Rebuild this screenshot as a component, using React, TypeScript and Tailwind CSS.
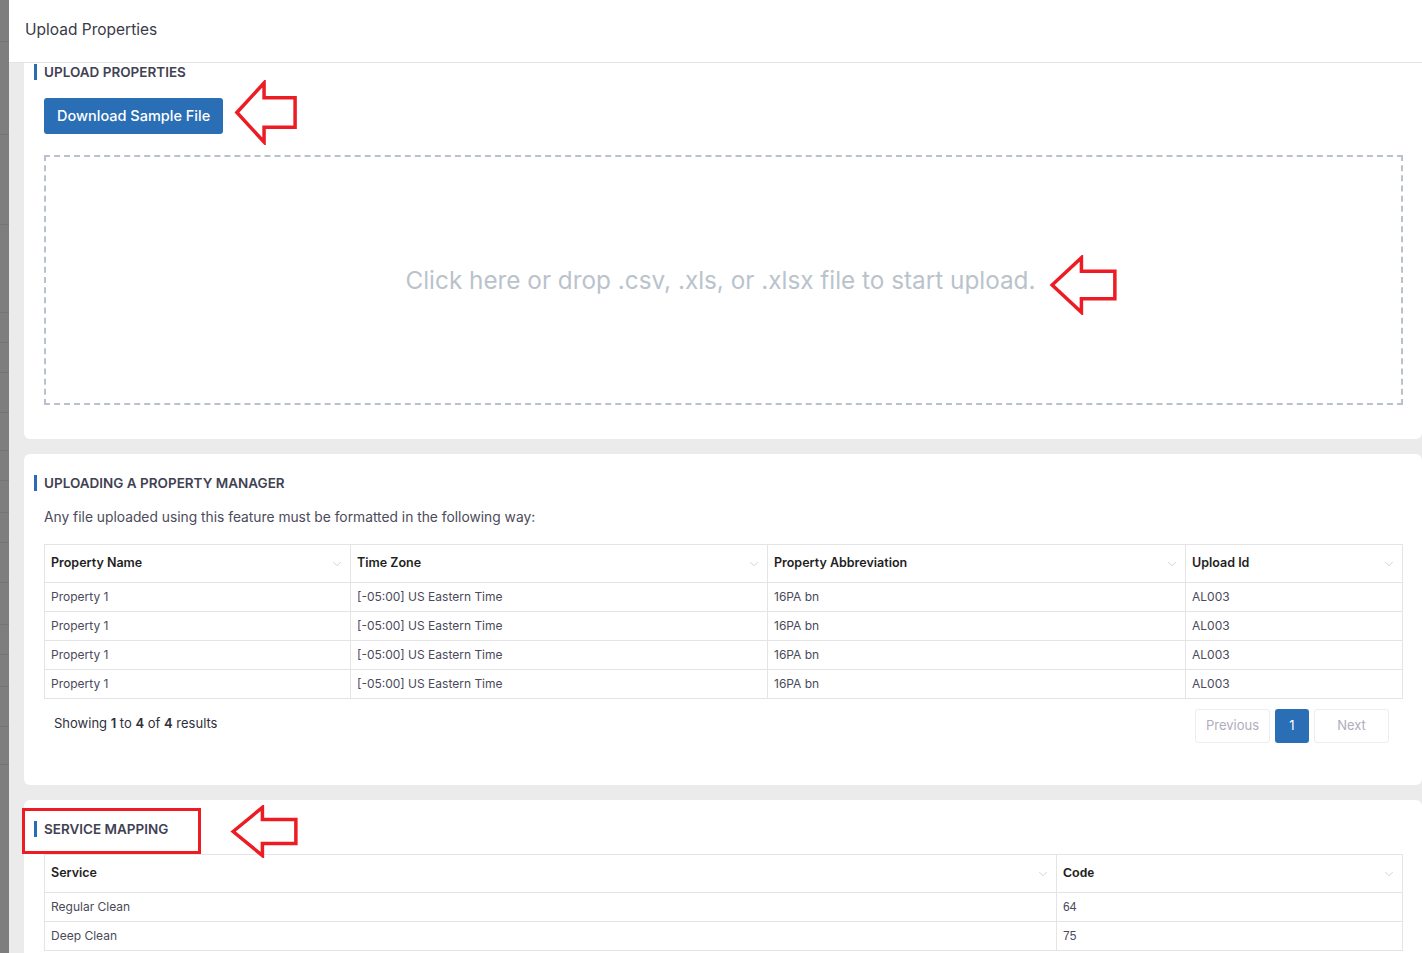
import React from "react"
import { ChevronDown } from "lucide-react"

const font = { fontFamily: "Inter, 'Noto Sans', sans-serif" }
const arial = { fontFamily: "'Liberation Sans', Arial, sans-serif" }

// red outline arrow pointing left, used as a callout
const CalloutArrow = ({ className }: { className: string }) => (
    <svg className={className} viewBox="0 0 66 66" fill="none" preserveAspectRatio="none">
        <path
            d="M3 33 L31 3 L31 18 L63 18 L63 48 L31 48 L31 63 Z"
            stroke="#ed1c24"
            strokeWidth="3.5"
            vectorEffect="non-scaling-stroke"
            fill="white"
        />
    </svg>
)

const SectionTitle = ({ children }: { children: React.ReactNode }) => (
    <div className="flex items-center gap-[7px] h-[16px]">
        <span className="w-[3px] h-[16px] bg-[#2a6cb3]"></span>
        <h3 className="text-[13.5px] leading-[16px] font-semibold text-[#3f4254]">{children}</h3>
    </div>
)

function HeadCell({ label, useArial }: { label: string; useArial?: boolean }) {
    return (
        <div className="h-[37px] px-[6px] flex items-center justify-between">
            <span
                className="font-semibold text-[12.5px] text-[#1f1f1f]"
                style={useArial ? { ...arial, fontWeight: 700 } : undefined}
            >
                {label}
            </span>
            <ChevronDown size={14} strokeWidth={1} className="text-[#b5b5b5]" />
        </div>
    )
}

const rows = [1, 2, 3, 4]

const services = [
    { name: "Regular Clean", code: "64" },
    { name: "Deep Clean", code: "75" },
]

const stripRows = [42, 93, 90, 88, 30, 30, 40, 38, 30, 32, 30, 40, 42, 30, 32, 40, 38]

export default function App() {
    return (
        <div className="w-[1422px] h-[953px] overflow-hidden flex bg-[#ebebeb]" style={font}>
            {/* dimmed page behind the drawer */}
            <div className="w-[9px] shrink-0 bg-[#7e7e7e] flex flex-col">
                {stripRows.map((h, i) => (
                    <div key={i} className="border-b border-[#747474]" style={{ height: h }}></div>
                ))}
            </div>

            <div className="flex-1 flex flex-col">
                {/* drawer header */}
                <div className="h-[63px] shrink-0 bg-white border-b border-[#e2e2e8] flex items-center px-4">
                    <h2 className="text-[15.5px] text-[#3a3a48] -mt-[3px]">Upload Properties</h2>
                </div>

                <div className="pl-[15px] flex flex-col gap-[15px]">
                    {/* upload card */}
                    <div className="relative bg-white rounded-b-[6px] pl-[10px] pr-[19px] pt-[1px] pb-[34px]">
                        <SectionTitle>UPLOAD PROPERTIES</SectionTitle>
                        <div className="pl-[10px] pt-[18px]">
                            <button className="block h-[36px] px-[13px] rounded-[3px] bg-[#2a6eb5] text-white text-[14.5px] font-medium">
                                Download Sample File
                            </button>
                            <div className="mt-[21px] h-[250px] border-2 border-dashed border-[#b9c2ca] flex items-center justify-center">
                                <p className="text-[24.3px] text-[#bac3cc] -ml-[6px]">
                                    Click here or drop .csv, .xls, or .xlsx file to start upload.
                                </p>
                            </div>
                        </div>
                        <CalloutArrow className="absolute left-[210px] top-[17px] w-[64px] h-[65px]" />
                        <CalloutArrow className="absolute left-[1025px] top-[192px] w-[69px] h-[60px]" />
                    </div>

                    {/* format card */}
                    <div className="bg-white rounded-[6px] pl-[10px] pr-[19px] pt-[21px] pb-[42px]">
                        <SectionTitle>UPLOADING A PROPERTY MANAGER</SectionTitle>
                        <div className="pl-[10px]">
                            <p className="mt-[16px] text-[13.8px] leading-[20px] text-[#4b4b5a]">
                                Any file uploaded using this feature must be formatted in the following way:
                            </p>
                            <table className="mt-[17px] w-full border border-[#e4e4e7] border-collapse">
                                <thead>
                                    <tr className="border-b border-[#e4e4e7]">
                                        <th className="w-[306px] p-0"><HeadCell label="Property Name" /></th>
                                        <th className="w-[417px] p-0 border-l border-[#e4e4e7]"><HeadCell label="Time Zone" /></th>
                                        <th className="w-[418px] p-0 border-l border-[#e4e4e7]"><HeadCell label="Property Abbreviation" /></th>
                                        <th className="p-0 border-l border-[#e4e4e7]"><HeadCell label="Upload Id" /></th>
                                    </tr>
                                </thead>
                                <tbody className="text-[12px] text-[#4a4a5a]">
                                    {rows.map((r) => (
                                        <tr key={r} className="h-[29px] border-b border-[#e4e4e7]">
                                            <td className="px-[6px]">Property 1</td>
                                            <td className="px-[6px] border-l border-[#e4e4e7]">[-05:00] US Eastern Time</td>
                                            <td className="px-[6px] border-l border-[#e4e4e7]">16PA bn</td>
                                            <td className="px-[6px] border-l border-[#e4e4e7]">AL003</td>
                                        </tr>
                                    ))}
                                </tbody>
                            </table>
                            <div className="mt-[10px] flex items-start justify-between pl-[10px] pr-[14px]">
                                <p className="pt-[5px] text-[13px] text-[#2f2f3a]">
                                    Showing <b className="font-semibold">1</b> to <b className="font-semibold">4</b> of <b className="font-semibold">4</b> results
                                </p>
                                <div className="flex gap-[5px]">
                                    <button className="w-[75px] h-[34px] rounded-[3px] border border-[#ececf2] text-[13px] text-[#b0adbb]">Previous</button>
                                    <button className="w-[34px] h-[34px] rounded-[3px] bg-[#2a6eb5] text-[13px] text-white">1</button>
                                    <button className="w-[75px] h-[34px] rounded-[3px] border border-[#ececf2] text-[13px] text-[#b0adbb]">Next</button>
                                </div>
                            </div>
                        </div>
                    </div>

                    {/* service mapping card */}
                    <div className="relative bg-white rounded-t-[6px] pl-[10px] pr-[19px] pt-[21px] pb-[20px]">
                        <SectionTitle>SERVICE MAPPING</SectionTitle>
                        <div className="pl-[10px] mt-[17px]">
                            <table className="w-full border border-[#e4e4e7] border-collapse">
                                <thead>
                                    <tr className="border-b border-[#e4e4e7]">
                                        <th className="w-[1012px] p-0"><HeadCell label="Service" /></th>
                                        <th className="p-0 border-l border-[#e4e4e7]"><HeadCell label="Code" useArial /></th>
                                    </tr>
                                </thead>
                                <tbody className="text-[12px] text-[#4a4a5a]">
                                    {services.map((s) => (
                                        <tr key={s.name} className="h-[29px] border-b border-[#e4e4e7]">
                                            <td className="px-[6px]">{s.name}</td>
                                            <td className="px-[6px] border-l border-[#e4e4e7]" style={arial}>{s.code}</td>
                                        </tr>
                                    ))}
                                </tbody>
                            </table>
                        </div>
                        {/* annotation box round the title */}
                        <div className="absolute left-[-2px] top-[8px] w-[179px] h-[46px] border-[3px] border-[#ed1c24]"></div>
                        <CalloutArrow className="absolute left-[206px] top-[5px] w-[69px] h-[53px]" />
                    </div>
                </div>
            </div>
        </div>
    )
}
